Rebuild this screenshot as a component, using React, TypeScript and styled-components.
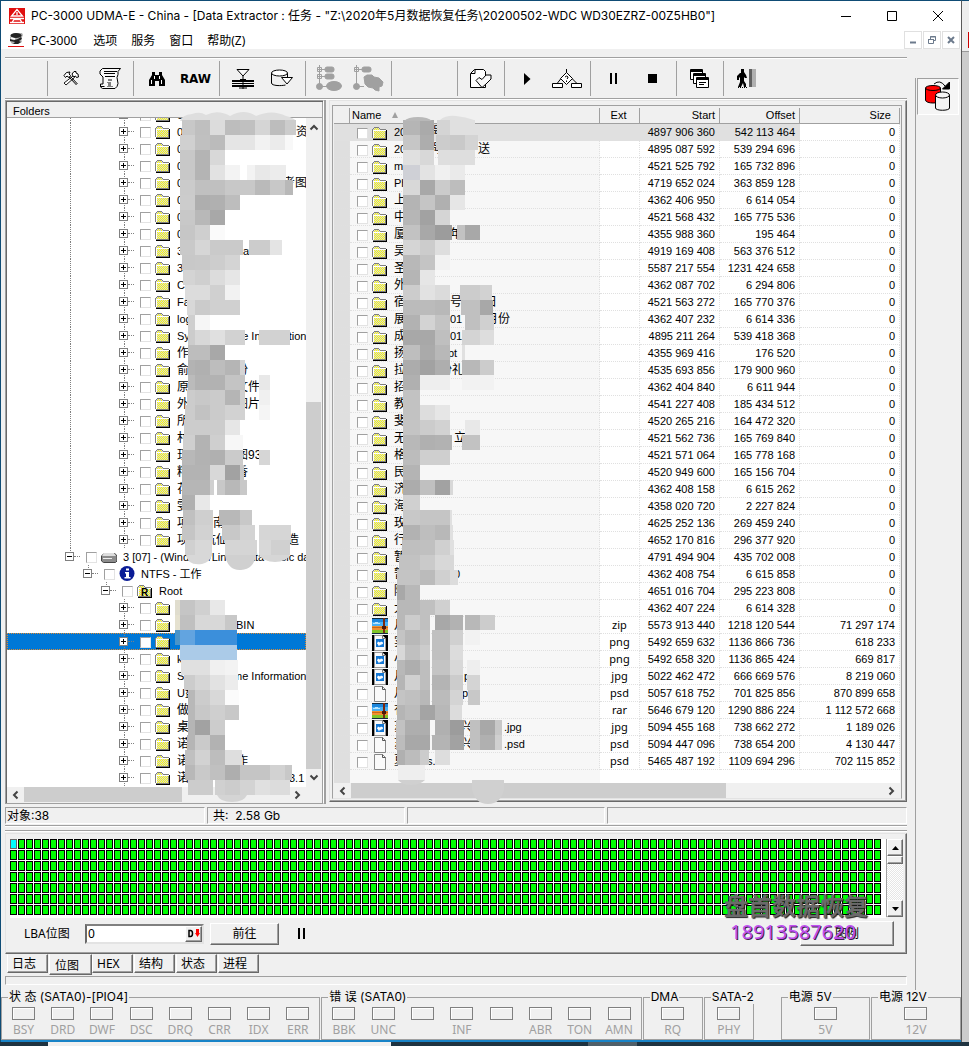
import React from 'react';
import styled, { createGlobalStyle, css } from 'styled-components';

const LIST = '"Liberation Sans", "Noto Sans CJK SC", sans-serif';
const UI = 'Inter, "Noto Sans CJK SC", sans-serif';
const PLAIN = '"Noto Sans", "Noto Sans CJK SC", sans-serif';

const Global = createGlobalStyle`
  * { box-sizing: border-box; }
  body { margin: 0; background: #d4d4d4; font: 12px/16px ${PLAIN}; color: #000; }
  button, input { font: inherit; color: inherit; margin: 0; padding: 0; }
  svg { display: block; }
`;

/* ---------- window frame ---------- */
const Desktop = styled.div`
  display: grid;
  grid-template-columns: minmax(0, 1fr) 7px;
`;
const Window = styled.main`
  background: #f0f0f0;
  border: 1px solid #0f4c75;
  border-width: 1px 1px 0 1px;
  border-right-color: #5a5a5a;
`;
const Behind = styled.div`
  background: linear-gradient(#eee 0 50px, #999 50px 51px, #ccc 51px 100%);
  border-top: 1px solid #0f4c75;
  padding-top: 31px;
  &::after { content: ''; display: block; width: 1px; height: 16px; margin-left: 6px; background: #c00; }
`;
const TitleBar = styled.header`
  display: flex;
  align-items: center;
  height: 29px;
  padding-left: 8px;
  background: #fff;
  gap: 6px;
`;
const Title = styled.h1`
  flex: 1;
  margin: 0;
  font: 12px/16px ${UI};
  white-space: nowrap;
  overflow: hidden;
`;
const WinButtons = styled.div`
  display: flex;
`;
const WinButton = styled.button`
  width: 46px;
  height: 28px;
  border: 0;
  background: none;
  display: grid;
  place-items: center;
`;
const MenuBar = styled.nav`
  display: flex;
  align-items: center;
  height: 19px;
  padding: 0 1px 0 7px;
  background: #fff;
`;
const MenuItem = styled.button`
  border: 0;
  background: none;
  padding: 2px 7px 0;
  line-height: 20px;
  white-space: nowrap;
  &:first-of-type { padding-right: 9px; }
`;
const Spacer = styled.div`flex: 1;`;
const ChildButton = styled.button`
  width: 18px;
  height: 18px;
  margin-left: 1px;
  border: 1px solid #e0e0e0;
  background: #fff;
  display: grid;
  place-items: center;
`;

/* ---------- work area ---------- */
const Work = styled.div`
  display: grid;
  grid-template-columns: minmax(0, 1fr) 46px;
`;
const Content = styled.div`
  padding: 8px 8px 5px 4px;
`;
const Side = styled.aside`
  border-left: 1px solid #a0a0a0;
  margin-top: 29px;
  padding-left: 1px;
`;
const SideButton = styled.button`
  width: 42px;
  height: 37px;
  border: 1px solid;
  border-color: #a0a0a0 #fff #fff #a0a0a0;
  background: #f5f5f5;
  display: grid;
  place-items: center;
`;
const Toolbar = styled.div`
  display: flex;
  height: 43px;
  padding: 3px 0 2px 42px;
  border-top: 1px solid #a0a0a0;
  border-bottom: 1px solid #fff;
  box-shadow: inset 0 1px #fff, inset 0 -1px #a0a0a0;
`;
const ToolGroup = styled.div<{ $blank?: boolean }>`
  display: flex;
  padding: 0 4px 0 3px;
  border-left: 1px solid #a0a0a0;
  height: 35px;
  ${p => p.$blank && css`width: 66px;`}
`;
const ToolButton = styled.button`
  width: 39px;
  height: 35px;
  border: 0;
  background: none;
  display: grid;
  place-items: center;
  font: bold 12px/18px "DejaVu Sans", sans-serif;
`;
const Split = styled.div`
  display: grid;
  grid-template-columns: 319px minmax(0, 1fr);
  height: 704px;
`;

/* ---------- folder tree ---------- */
const FolderPanel = styled.section`
  position: relative;
  border: 1px solid;
  border-color: #a0a0a0 #fff #a0a0a0 #a0a0a0;
  padding: 1px;
  box-shadow: inset 1px 1px #696969, inset -1px 0 #a0a0a0, 2px 0 #a0a0a0;
`;
const PanelHead = styled.h2`
  margin: 0;
  height: 16px;
  padding-left: 6px;
  font: 11px/18px ${LIST};
  border-bottom: 1px solid #a0a0a0;
`;
const TreeArea = styled.div`
  display: grid;
  grid-template-columns: minmax(0, 1fr) 16px;
  grid-template-rows: 669px 15px;
`;
const Tree = styled.ul`
  margin: 0;
  padding: 0 0 1px;
  list-style: none;
  background: #fff;
  display: flex;
  flex-direction: column;
  justify-content: flex-end;
  overflow: hidden;
`;
const TreeRow = styled.li<{ $selected?: boolean }>`
  display: flex;
  flex: none;
  height: 17px;
  font: 11px/18px ${LIST};
  white-space: nowrap;
  background: ${p => (p.$selected ? '#0078d7' : 'none')};
  outline: ${p => (p.$selected ? '1px dotted #e08a30' : 'none')};
  outline-offset: -1px;
`;
const Indent = styled.span<{ $level: number; $guide?: boolean }>`
  width: ${p => 58 + p.$level * 18}px;
  flex: none;
  ${p => p.$guide && css`
    &::before {
      content: '';
      display: block;
      height: 17px;
      margin-left: 63px;
      border-left: 1px dotted #808080;
    }
  `}
`;
const Node = styled.span<{ $line: boolean }>`
  position: relative;
  flex: none;
  width: 21px;
  padding-top: 4px;
  &::before {
    content: '';
    position: absolute;
    left: 5px;
    top: 0;
    height: ${p => (p.$line ? 17 : 5)}px;
    border-left: 1px dotted #808080;
  }
  &::after {
    content: '';
    position: absolute;
    left: 9px;
    top: 8px;
    width: 6px;
    border-top: 1px dotted #808080;
  }
`;
const Toggle = styled.button<{ $open?: boolean }>`
  position: relative;
  display: block;
  width: 9px;
  height: 9px;
  border: 1px solid #808080;
  background:
    linear-gradient(#000, #000) center / 5px 1px no-repeat,
    linear-gradient(#000, #000) center / 1px ${p => (p.$open ? 1 : 5)}px no-repeat,
    #fff;
`;
const Check = styled.input`
  appearance: none;
  flex: none;
  width: 11px;
  height: 11px;
  margin: 4px 4px 0 0;
  border: 1px solid;
  border-color: #a0a0a0 #e3e3e3 #e3e3e3 #a0a0a0;
  background: #fff;
`;
const IconSlot = styled.span`
  flex: none;
  width: 16px;
  margin-right: 6px;
`;
const Run = styled.span<{ $w?: number; $cjk: boolean }>`
  flex: none;
  width: ${p => (p.$w ? p.$w + 'px' : 'auto')};
  font-size: ${p => (p.$cjk ? 12 : 11)}px;
  white-space: pre;
`;
const Bar = styled.div<{ $v?: boolean; $pos: number; $len: string }>`
  display: flex;
  flex-direction: ${p => (p.$v ? 'column' : 'row')};
  justify-content: space-between;
  align-items: center;
  background: #f0f0f0;
  height: ${p => (p.$v ? 'auto' : '15px')};
  padding: ${p => (p.$v ? '5px 0' : '0 4px')};
  background-image: linear-gradient(#cdcdcd, #cdcdcd);
  background-repeat: no-repeat;
  background-position: ${p => (p.$v ? `0 ${p.$pos}px` : `${p.$pos}px 0`)};
  background-size: ${p => (p.$v ? `15px ${p.$len}` : `${p.$len} 15px`)};
`;

/* ---------- file list ---------- */
const ListPanel = styled.section`
  position: relative;
  margin-left: 5px;
  border: 1px solid;
  border-color: #e3e3e3 #696969 #696969 #e3e3e3;
  box-shadow: inset -1px -1px #a0a0a0;
  padding: 4px 4px 0 2px;
  height: 702px;
`;
const ListInner = styled.div`
  border: 1px solid;
  border-color: #a0a0a0 #a0a0a0 #e3e3e3 #a0a0a0;
  padding: 2px 1px 0;
`;
const ListBody = styled.div`
  height: 675px;
  background: linear-gradient(90deg, #dfdfdf 0 16px, #f7f7f7 16px 266px, #fff 266px);
`;
const Table = styled.table`
  width: 100%;
  table-layout: fixed;
  border-collapse: separate;
  border-spacing: 0;
  font: 11px/16px ${LIST};
`;
const Th = styled.th<{ $align?: string }>`
  height: 16px;
  padding: 0 4px 0 2px;
  line-height: 15px;
  font-weight: normal;
  text-align: ${p => p.$align || 'left'};
  background: #f0f0f0;
  border-right: 1px solid #a0a0a0;
  border-bottom: 1px solid #a0a0a0;
  &:last-child { padding-right: 8px; }
`;
const SortMark = styled.span`
  display: inline-block;
  margin-left: 8px;
  vertical-align: 1px;
  border: 3px solid transparent;
  border-top: 0;
  border-bottom: 6px solid #a0a0a0;
`;
const FileRow = styled.tr<{ $current?: boolean }>`
  height: 17px;
  & > td:not(:last-child) { background: ${p => (p.$current ? '#e0e0e0' : 'none')}; }
`;
const Td = styled.td<{ $align?: string; $ui?: boolean }>`
  height: 17px;
  padding: 0 4px;
  text-align: ${p => p.$align || 'right'};
  white-space: nowrap;
  border-right: 1px dotted #e0e0e0;
  border-bottom: 1px dotted #e0e0e0;
  ${p => p.$ui && css`font: 11px/16px ${PLAIN};`}
`;
const NameCell = styled.div`
  display: flex;
  height: 16px;
  padding-left: 3px;
`;
const Mosaic = styled.svg`
  position: absolute;
  left: 0;
  top: 0;
  overflow: visible;
  pointer-events: none;
`;

/* ---------- status cells ---------- */
const StatusBar = styled.div`
  display: grid;
  grid-template-columns: 200px 198px 198px minmax(0, 1fr);
  column-gap: 2px;
  margin-top: 3px;
  padding-bottom: 1px;
  border-bottom: 1px solid #a0a0a0;
`;
const StatusCell = styled.div<{ $pad?: number }>`
  height: 17px;
  padding-left: ${p => p.$pad ?? 1}px;
  border: 1px solid;
  border-color: #a0a0a0 #fff #fff #a0a0a0;
  font: 12px/16px ${UI};
  white-space: pre;
`;
const Groove = styled.div`
  height: 5px;
  border-bottom: 1px solid #a0a0a0;
  border-top: 1px solid #fff;
  box-shadow: 0 1px #fff;
`;

/* ---------- bitmap panel ---------- */
const MapPanel = styled.section`
  position: relative;
  margin-top: 2px;
  border: 1px solid;
  border-color: #e3e3e3 #696969 #696969 #e3e3e3;
  box-shadow: inset -1px -1px #a0a0a0;
  padding: 5px 3px 4px 4px;
`;
const MapArea = styled.div`
  display: grid;
  grid-template-columns: minmax(0, 1fr) 17px;
`;
const Cells = styled.div`
  display: grid;
  grid-template-columns: repeat(auto-fill, 7px);
  grid-auto-rows: 10px;
  gap: 1px;
  height: 79px;
  background: #fff;
  overflow: hidden;
`;
const Cell = styled.i<{ $first?: boolean }>`
  border: 1px solid ${p => (p.$first ? '#666' : '#000')};
  background: ${p => (p.$first ? '#00ffff' : '#00ff00')};
`;
const ClassicBar = styled.div`
  display: flex;
  flex-direction: column;
  height: 78px;
  border-left: 1px solid #a0a0a0;
  background: repeating-conic-gradient(#e6e6e6 0 25%, #fff 0 50%) 0 0 / 2px 2px;
`;
const raised = css`
  border: 1px solid;
  border-color: #fff #696969 #696969 #fff;
  background: #f0f0f0;
  box-shadow: inset -1px -1px #a0a0a0;
`;
const ClassicButton = styled.button`
  ${raised}
  height: 17px;
  display: grid;
  place-items: center;
`;
const ClassicThumb = styled.div`
  ${raised}
  height: 8px;
  margin-bottom: auto;
`;
const Controls = styled.div`
  display: flex;
  align-items: center;
  height: 31px;
  padding: 0 9px 0 14px;
`;
const LbaLabel = styled.label`
  width: 61px;
`;
const LbaBox = styled.div`
  display: flex;
  width: 119px;
  height: 20px;
  margin-right: 6px;
  border: 2px solid;
  border-color: #808080 #e3e3e3 #e3e3e3 #696969;
  background: #fff;
`;
const LbaInput = styled.input`
  flex: 1;
  min-width: 0;
  border: 0;
  padding-left: 1px;
  background: none;
`;
const DButton = styled.button`
  ${raised}
  width: 17px;
  display: grid;
  place-items: center;
`;
const PushButton = styled.button<{ $w: number }>`
  ${raised}
  width: ${p => p.$w}px;
  height: ${p => (p.$w > 80 ? 25 : 22)}px;
`;
const PauseButton = styled.button`
  width: 46px;
  border: 0;
  background: none;
  display: grid;
  place-items: center;
`;
const Watermark = styled.div`
  position: absolute;
  right: 38px;
  bottom: 10px;
  font: bold 24px/30px ${PLAIN};
  color: #6a6a6a;
  text-shadow: 1px 1px 1px #222;
  pointer-events: none;
`;
const Phone = styled.div`
  margin-left: 6px;
  font: 20px/22px ${PLAIN};
  color: #c050f0;
  text-shadow: 1px 1px #402050;
`;
const Tabs = styled.div`
  display: flex;
  height: 21px;
  padding-left: 2px;
`;
const Tab = styled.button<{ $active?: boolean }>`
  height: ${p => (p.$active ? 21 : 19)}px;
  width: ${p => (p.$active ? 43 : 41)}px;
  margin-right: ${p => (p.$active ? 0 : 1)}px;
  padding: ${p => (p.$active ? '2px 0 0 5px' : '0 0 0 4px')};
  text-align: left;
  border: 1px solid;
  border-color: transparent #696969 #696969 #fff;
  background: #f0f0f0;
  box-shadow: inset -1px -1px #a0a0a0;
`;
const Strip = styled.div`
  height: 9px;
  margin-top: 1px;
  border: 1px solid;
  border-color: #a0a0a0 #fff #fff #a0a0a0;
`;

/* ---------- indicator groups ---------- */
const Groups = styled.div`
  display: grid;
  grid-template-columns:
    minmax(0, 319fr) minmax(0, 320fr) minmax(0, 60fr) minmax(0, 50fr) 25px minmax(0, 89fr) minmax(0, 90fr);
  column-gap: 1px;
  height: 50px;
`;
const Group = styled.fieldset<{ $skip?: boolean }>`
  ${p => p.$skip && css`grid-column: 6;`}
  min-width: 0;
  height: 50px;
  margin: 0;
  padding: 0 2px;
  border: 1px solid #a0a0a0;
`;
const Legend = styled.legend`
  padding: 0 1px;
  margin-left: 4px;
  font: 12px/14px ${UI};
  white-space: pre;
`;
const Leds = styled.div`
  display: flex;
`;
const Led = styled.div`
  flex: 1;
  min-width: 0;
  height: 30px;
  text-align: center;
  color: #a0a0a0;
  line-height: 15px;
  padding-top: 3px;
  &::before {
    content: '';
    display: block;
    width: 21px;
    height: 11px;
    margin: 0 auto 2px;
    border: 1px solid #808080;
    box-shadow: inset 1px 1px #fff;
  }
`;
const Edge = styled.div`
  height: 2px;
  background: #1883c7;
`;
const Taskbar = styled.footer`
  grid-column: 1 / -1;
  display: flex;
  height: 6px;
  background: #1f3340;
`;
const TaskItem = styled.span<{ $left: number; $w: number; $bg: string }>`
  width: ${p => p.$w}px;
  margin-left: ${p => p.$left}px;
  background: ${p => p.$bg};
`;

/* ---------- icons ---------- */
const Hidden = styled.svg`
  position: absolute;
`;
const Defs = () => (
  <Hidden width="0" height="0" aria-hidden>
    <defs>
      <pattern id="dither" width="2" height="2" patternUnits="userSpaceOnUse">
        <rect width="2" height="2" fill="#ff0" />
        <rect width="1" height="1" fill="#d0d0e8" />
        <rect x="1" y="1" width="1" height="1" fill="#d0d0e8" />
      </pattern>
    </defs>
  </Hidden>
);
const Folder = ({ mark }: { mark?: string }) => (
  <svg width="16" height="17" viewBox="0 0 16 17" shapeRendering="crispEdges">
    <path d="M1 14V5h1V4h5v1h7v10H1z" fill="url(#dither)" />
    <path d="M0 5h1v9H0zM1 4h1v1H1zM2 3h5v1H2zM7 4h1v1H7zM8 5h6v1H8z" fill="#808080" />
    <path d="M1 6h1v8H1zM2 6h12v1H2z" fill="#fff" />
    <path d="M14 6h1v10H1v-1h13z" fill="#000" />
    <path d="M13 7h1v8h-1zM1 14h12v1H1z" fill="#808080" />
    {mark && <text x="4" y="14" fontSize="10" fontWeight="bold" fontFamily="Liberation Sans">{mark}</text>}
  </svg>
);
const Drive = () => (
  <svg width="16" height="17" viewBox="0 0 16 17">
    <path d="M3 5.500h11l2 2.500v5l-1.500 1.500h-12L.5 13V8z" fill="#8c8c8c" stroke="#444" />
    <path d="M3 5h10l2 3H1z" fill="#ddd" />
    <path d="M2 10.500h9" stroke="#eee" />
  </svg>
);
const Info = () => (
  <svg width="16" height="17" viewBox="0 0 16 17">
    <circle cx="8" cy="8.500" r="7.500" fill="#0a1c96" />
    <path d="M7 3.500h3v2H7zM6 7h4v5h1.500v1.500H5.500V12H7V8.500H6z" fill="#fff" />
  </svg>
);
const Page = () => (
  <svg width="16" height="17" viewBox="0 0 16 17">
    <path d="M2.500 1.500h8l3 3v12h-11z" fill="#fafafa" stroke="#888" />
    <path d="M10.500 1.500v3h3" fill="none" stroke="#555" />
  </svg>
);
const Picture = () => (
  <svg width="16" height="17" viewBox="0 0 16 17">
    <path d="M0 1h16v16H0z" fill="#000" />
    <path d="M2.500 1.500h8l3 3v12h-11z" fill="#fafafa" stroke="#999" />
    <path d="M10.500 1.500v3h3" fill="none" stroke="#777" />
    <path d="M4 5h8v8H4z" fill="#1477d4" />
    <path d="M5 9.500l1-2 2 1 1-1 2 1v2l-1-1-1 2-1-1-1 2-1-2z" fill="#fff" />
  </svg>
);
const Archive = () => (
  <svg width="16" height="17" viewBox="0 0 16 17" shapeRendering="crispEdges">
    <path d="M0 1h16v16H0z" fill="#102a40" />
    <path d="M0 2h16v7H0z" fill="#48b0f4" />
    <path d="M0 2h16v3H0z" fill="#1c86dc" />
    <path d="M1 6h7v1H1zM3 5h3v1H3z" fill="#b8e4ff" />
    <path d="M0 9h16v4H0z" fill="#f09030" />
    <path d="M0 10h16v1H0z" fill="#c86818" />
    <path d="M0 13h16v3H0z" fill="#80c428" />
    <path d="M11 1h2v15h-2z" fill="#7a2a10" />
    <path d="M10 9h4v3h-4z" fill="#4a1808" />
  </svg>
);
const Chevron = ({ dir }: { dir: 'l' | 'r' | 'u' | 'd' }) => {
  const d = { l: 'M6.500 1.500L3 5l3.500 3.500', r: 'M3.500 1.500L7 5 3.500 8.500', u: 'M1.500 6.500L5 3l3.500 3.500', d: 'M1.500 3.500L5 7l3.500-3.500' }[dir];
  return <svg width="10" height="10" viewBox="0 0 10 10"><path d={d} fill="none" stroke="#444" strokeWidth="2" /></svg>;
};
const Tri = ({ up }: { up?: boolean }) => (
  <svg width="7" height="4" viewBox="0 0 7 4"><path d={up ? 'M0 4L3.500 0 7 4z' : 'M0 0L3.500 4 7 0z'} /></svg>
);
const Logo = () => (
  <svg width="16" height="16" viewBox="0 0 16 16">
    <path d="M0 0h16v16H0z" fill="#e01010" />
    <path d="M8 1.500L2.500 8h11zM8 4v3" fill="none" stroke="#fff" strokeWidth="1.300" />
    <path d="M1 10.500h14M3 14.500l2-3h6l2 3M1 14.500h14" fill="none" stroke="#fff" strokeWidth="1.300" />
  </svg>
);
const DiskLogo = () => (
  <svg width="16" height="15" viewBox="0 0 16 15">
    <path d="M2 5l4-4h8l1 2-2 4 1 3-4 2H4L2 9z" fill="#b0b0b0" />
    <ellipse cx="8" cy="3.500" rx="5.500" ry="2.500" fill="#222" />
    <path d="M2 7q5 3 11-2l1 2-3 2 2 1-3 2H5l2-2-5-1z" fill="#222" />
    <path d="M3 6l4 1" stroke="#fff" strokeWidth="1.500" />
    <path d="M0 14.500h16" stroke="#e01010" />
  </svg>
);

const Ico = ({ w, h, children }: { w: number; h: number; children: React.ReactNode }) => (
  <svg width={w} height={h} viewBox={`0 0 ${w} ${h}`} fill="none" stroke="#000">{children}</svg>
);
const Tools = () => (
  <Ico w={16} h={15}>
    <path d="M1 12l9-7 1.500 1.500L3 14z" fill="#fff" strokeWidth=".9" />
    <path d="M9 3l2-2.500h2v1.500l2 1 .5 3-2 .5-1-1.500-2 1z" fill="#fff" />
    <path d="M1 4.500l2.500-3 3.500-.5-1 2 1.500 1.500-1.500 2L4 5 2.500 6.500z" fill="#fff" />
    <path d="M6 6l7.500 8M7.500 5.500l7 7.500" />
  </Ico>
);
const Scroll = () => (
  <Ico w={22} h={22}>
    <path d="M3.500.5h18l-2.500 3v3l-1 3 1 6-1 3-2 2H3.500l-2-1.500v-3H4v-7l-3-3v-3z" fill="#f8f8f8" />
    <path d="M5 3.500h13M5 5.500h11M6 8.500h10M1.500 18.500h4" />
    <path d="M9 11h4v2H9zM8 14h4v4h2v1H8v-1h1v-3H8z" fill="#808080" stroke="none" />
  </Ico>
);
const Binoculars = () => (
  <Ico w={16} h={14}>
    <path d="M3 0h3v3h4V0h3v3l3 5v6h-6V9H6v5H0V8l3-5z" fill="#000" stroke="none" />
    <path d="M2.500 8v4M5.500 4v3M10.500 4v3M12.500 8v4" stroke="#fff" />
  </Ico>
);
const Press = () => (
  <Ico w={24} h={20}>
    <path d="M6 .5h12l-6 6.500zM12 7v13" fill="#f8f8f8" />
    <path d="M1 12h22M1 17h22" strokeWidth="2" />
    <path d="M1 14.500h22" strokeWidth="1" />
    <path d="M9 10.500h6M8 19h8" />
  </Ico>
);
const CylinderDown = () => (
  <Ico w={24} h={19}>
    <path d="M1.500 4v10c0 3 10 3 14 2M17.500 4v4" />
    <ellipse cx="9.500" cy="4" rx="8" ry="3" fill="#fff" />
    <path d="M11.500 8.500h11l-5.500 6.500z" fill="#fff" />
  </Ico>
);
const TreeShape = ({ b }: { b?: boolean }) => (
  <svg width={b ? 32 : 28} height="27" viewBox={b ? '0 0 32 27' : '0 0 28 27'} fill="#a0a0a0" stroke="#a0a0a0">
    <path d="M4.500 0v22M4 4.500h6M4 21.500h8" fill="none" />
    <path d="M2.500 2.500h4v4h-4zM4.500 2.500v4M2.500 4.500h4" fill="#f0f0f0" />
    <rect x="10" y="2" width="9" height="5" rx="2" />
    {!b && <path d="M2.500 9.500h4v4h-4zM4.500 9.500v4M2.500 11.500h4" fill="#f0f0f0" />}
    {!b && <path d="M6 11.500h5" />}
    {!b && <rect x="10" y="9" width="9" height="5" rx="2" />}
    <circle cx="4.500" cy="21.500" r="3" />
    {b ? <path d="M12 12l3-2h5l2 2 5 1 4 4-1 4-3 1v4l-4-1-2-2-5-1-3-3z" /> : <ellipse cx="19" cy="21" rx="7.500" ry="4.500" />}
  </svg>
);
const PagePen = () => (
  <Ico w={24} h={20}>
    <path d="M1.500 18.500V4.500l4-4h9l2 2v16zM6 .5v4H2" fill="#fff" />
    <path d="M7 11.500l3-3 3 2 4-4.500h5v4l-5 5-4 3.500z" fill="#f8f8f8" />
  </Ico>
);
const Flow = () => (
  <Ico w={30} h={20}>
    <path d="M14.500 0v4M9 9.500L5.500 14M20 9.500l4.500 4.500" />
    <path d="M14.500 3.500l6 6-6 6-6-6z" fill="#fff" />
    <path d="M.5 14.500h10v4H.5zM19.500 14.500h10v4h-10z" fill="#fff" />
    <path d="M13 8q2-2 3 0 0 1-1 2M14.500 11.500v1.500" />
  </Ico>
);
const Pause = () => (
  <svg width="8" height="11" viewBox="0 0 8 11"><path d="M0 0h2v11H0zM5 0h2v11H5z" /></svg>
);
const Cascade = () => (
  <Ico w={20} h={20}>
    {[0, 4, 8].map(o => (
      <g key={o}>
        <path d={`M${o * 0.75 + 0.5} ${o + 0.5}h12v10h-12z`} fill="#fff" />
        <path d={`M${o * 0.75} ${o + 2}h13`} strokeWidth="2" />
      </g>
    ))}
    <path d="M9 13.500h7M9 15.500h5" />
  </Ico>
);
const Exit = () => (
  <svg width="19" height="19" viewBox="0 0 19 19">
    <path d="M4 0h3v3l2 3 1 3H8L7 8v4l2 3v3H7l-1-4-2 4H1l2-5V8L2 9v2H0V7l3-3h1z" />
    <path d="M12 0h3v18h-3z" fill="#606060" />
    <path d="M15 0h4v18h-4z" fill="#b0b0b0" />
    <path d="M1 18.500h9" stroke="#000" strokeDasharray="1 1" />
  </svg>
);
const Cylinders = () => (
  <Ico w={26} h={31}>
    <path d="M.5 7v12c0 4 15 4 15 0V7" fill="#f00" />
    <ellipse cx="8" cy="7" rx="7.500" ry="2.500" fill="#f00" />
    <path d="M10.500 14v13c0 3 14 3 14 0V14" fill="#f4f4f4" />
    <ellipse cx="17.500" cy="14" rx="7" ry="3" fill="#f4f4f4" />
    <path d="M9 3q6-5 11 2" />
    <path d="M24.500 1v7h-7z" fill="#000" />
  </Ico>
);

/* ---------- data ---------- */
/* each entry: head of the name, then [x, text] pieces that stay readable */
type Piece = [number, string];
type TreeItem = { level?: number; icon?: 'drive' | 'info' | 'root'; head: string; rest?: Piece[]; open?: boolean; guide?: boolean; selected?: boolean };
const g = (head: string, ...rest: Piece[]): TreeItem => ({ head, rest, guide: true });
const t = (head: string, ...rest: Piece[]): TreeItem => ({ head, rest });
const tree: TreeItem[] = [
  g('03'), g('0', [119, '资']), g('0'), g('0'), g('0', [106, '考图']), g('0'), g('0'), g('0'), g('3', [66, 'at']),
  g('3'), g('C'), g('Fa'), g('log'), g('System Vo', [56, 'me Information']), g('作'), g('俞', [59, '份']), g('原', [59, '文件']),
  g('外', [59, '图片']), g('所'), g('村'), g('珏', [59, '图93']), g('精', [59, '香']), g('花'), g('雯'),
  g('项', [36, '南']), g('项', [27, '炕仙'], [110, '造']),
  { level: 0, icon: 'drive', head: '3 [07] - (Windows/Linux Data Basic data)', open: true },
  { level: 1, icon: 'info', head: 'NTFS - 工作', open: true },
  { level: 2, icon: 'root', head: 'Root', open: true },
  t(''), t('', [59, 'BIN']), { head: '', selected: true }, t('k'), t('System Vo', [56, 'me Information']), t('U盘'), t('做'),
  t('桌'), t('诺'), t('诺', [59, '作']), t('诺', [112, '3.1']),
];

type FileItem = [Piece[], string, string, string, string];
const file = (head: string, rest: Piece[], ext: string, start: string, offset: string, size = '0'): FileItem =>
  [[[0, head], ...rest], ext, start, offset, size];
const files: FileItem[] = [
  file('20', [[38, '号']], '', '4897 906 360', '542 113 464'),
  file('20', [[38, '号'], [84, '送']], '', '4895 087 592', '539 294 696'),
  file('ma', [], '', '4521 525 792', '165 732 896'),
  file('Ph', [], '', '4719 652 024', '363 859 128'),
  file('上', [], '', '4362 406 950', '6 614 054'),
  file('中', [], '', '4521 568 432', '165 775 536'),
  file('厦', [[56, '年']], '', '4355 988 360', '195 464'),
  file('吴', [], '', '4919 169 408', '563 376 512'),
  file('圣', [], '', '5587 217 554', '1231 424 658'),
  file('外', [], '', '4362 087 702', '6 294 806'),
  file('宿', [[56, '号-'], [91, '日']], '', '4521 563 272', '165 770 376'),
  file('展', [[56, '01'], [92, '月份']], '', '4362 407 232', '6 614 336'),
  file('成', [[56, '018']], '', '4895 211 264', '539 418 368'),
  file('扬', [[54, 'pt']], '', '4355 969 416', '176 520'),
  file('拉', [[46, '份礼']], '', '4535 693 856', '179 900 960'),
  file('招', [], '', '4362 404 840', '6 611 944'),
  file('教', [], '', '4541 227 408', '185 434 512'),
  file('斐', [], '', '4520 265 216', '164 472 320'),
  file('无', [[60, '立']], '', '4521 562 736', '165 769 840'),
  file('格', [], '', '4521 571 064', '165 778 168'),
  file('民', [], '', '4520 949 600', '165 156 704'),
  file('济', [], '', '4362 408 158', '6 615 262'),
  file('海', [], '', '4358 020 720', '2 227 824'),
  file('玫', [], '', '4625 252 136', '269 459 240'),
  file('行', [], '', '4652 170 816', '296 377 920'),
  file('暂', [], '', '4791 494 904', '435 702 008'),
  file('暂', [[60, '0']], '', '4362 408 754', '6 615 858'),
  file('陈', [], '', '4651 016 704', '295 223 808'),
  file('大', [], '', '4362 407 224', '6 614 328'),
  file('月', [], 'zip', '5573 913 440', '1218 120 544', '71 297 174'),
  file('实', [], 'png', '5492 659 632', '1136 866 736', '618 233'),
  file('小', [], 'png', '5492 658 320', '1136 865 424', '669 817'),
  file('月', [[70, 'p']], 'jpg', '5022 462 472', '666 669 576', '8 219 060'),
  file('月', [[68, 'p']], 'psd', '5057 618 752', '701 825 856', '870 899 658'),
  file('有', [], 'rar', '5646 679 120', '1290 886 224', '1 112 572 668'),
  file('苏', [[66, '兴'], [110, '.jpg']], 'jpg', '5094 455 168', '738 662 272', '1 189 026'),
  file('苏', [[66, '兴'], [110, '.psd']], 'psd', '5094 447 096', '738 654 200', '4 130 447'),
  file('夏', [[33, 's.']], 'psd', '5465 487 192', '1109 694 296', '702 115 852'),
];

/* censor blocks: per 15px band, runs of [x, width, colour] */
type Band = [number, ...(number | string)[]];
const treeBlocks: Band[] = [
  [120, 182, 13, 'c8', 195, 15, 'bf', 210, 15, 'dc', 225, 15, 'bd', 240, 15, 'c0', 255, 15, 'd5', 270, 15, 'bd', 285, 11, 'cc'],
  [135, 180, 15, 'd0', 195, 15, 'c0', 210, 15, 'bb', 225, 30, 'e5', 255, 15, 'f2', 270, 15, 'eb', 285, 8, 'f8'],
  [150, 180, 15, 'c8', 195, 15, 'b4', 210, 15, 'd8'],
  [165, 180, 15, 'c8', 195, 15, 'b4', 210, 15, 'e2', 225, 15, 'f3', 247, 8, 'f3', 255, 15, 'e8', 270, 16, 'ec'],
  [180, 180, 15, 'cb', 195, 30, 'c0', 225, 30, 'c8', 255, 15, 'ba', 270, 15, 'c8', 285, 8, 'b8'],
  [195, 180, 15, 'cc', 195, 15, 'ae', 210, 15, 'b0', 225, 15, 'bd'],
  [210, 180, 15, 'c8', 195, 15, 'b8', 210, 15, 'a8'],
  [225, 180, 15, 'c6', 195, 15, 'cf', 210, 15, 'fa'],
  [240, 180, 15, 'c9', 195, 15, 'd6', 210, 33, 'ca', 249, 21, 'cc', 270, 12, 'e4'],
  [255, 182, 13, 'c8', 195, 15, 'c9', 210, 15, 'cd', 225, 15, 'd4'],
  [270, 183, 12, 'd4', 195, 15, 'cf', 210, 15, 'dc', 225, 15, 'e6'],
  [285, 185, 10, 'dc', 195, 15, 'dc', 210, 15, 'd0', 225, 15, 'f2'],
  [300, 187, 8, 'd8', 195, 15, 'cb', 210, 30, 'd0'],
  [315, 188, 7, 'cf', 195, 15, 'f6'],
  [330, 188, 7, 'cc', 195, 15, 'd8', 210, 15, 'e0', 225, 20, 'd2', 259, 31, 'd2'],
  [345, 188, 22, 'bd', 210, 15, 'a8'],
  [360, 188, 7, 'b3', 195, 15, 'b0', 210, 15, 'bd', 225, 15, 'b5', 240, 5, 'd4'],
  [375, 188, 7, 'bb', 195, 30, 'b2', 225, 20, 'c4', 259, 11, 'e8'],
  [390, 187, 8, 'cc', 195, 15, 'c8', 210, 15, 'cb', 225, 15, 'b5', 240, 5, 'd0', 259, 11, 'f0'],
  [405, 185, 10, 'cc', 195, 15, 'c2', 210, 15, 'cb', 225, 20, 'd2', 259, 11, 'f5'],
  [420, 184, 41, 'cc', 225, 15, 'e6'],
  [435, 183, 12, 'cf', 195, 15, 'b3', 210, 15, 'cf', 225, 18, 'f7'],
  [450, 182, 13, 'b8', 195, 15, 'b2', 210, 15, 'b0', 225, 18, 'cb', 259, 11, 'd6'],
  [465, 182, 28, 'b3', 210, 15, 'd8', 225, 15, 'a2', 240, 4, 'c8'],
  [480, 182, 28, 'b6', 210, 4, 'd0', 217, 8, 'c8', 225, 15, 'b8', 240, 7, 'c8'],
  [495, 182, 13, 'b0', 195, 15, 'e8'],
  [510, 183, 12, 'c0', 195, 18, 'cf', 219, 21, 'b8', 240, 12, 'c8'],
  [525, 182, 13, 'c5', 195, 18, 'd2', 222, 18, 'c8', 240, 15, 'd3', 259, 32, 'd6'],
  [540, 185, 10, 'd0', 195, 17, 'd8', 225, 32, 'd5', 259, 12, 'd8', 271, 19, 'd0'],
  [600, 175, 5, '#e0ddce', 180, 15, 'c5', 195, 15, 'd0', 210, 15, 'e8'],
  [615, 175, 5, '#e5e1cf', 180, 15, 'c0', 195, 30, 'd8', 225, 12, 'c8'],
  [630, 175, 5, '#4a94c8', 180, 15, '#62a4e0', 195, 42, '#3b8fdb'],
  [645, 180, 57, '#abcbe8'],
  [660, 181, 29, 'e0', 210, 15, 'f0', 225, 13, 'f3'],
  [675, 184, 11, 'cc', 195, 15, 'd6', 210, 15, 'e2', 225, 13, 'ec'],
  [690, 188, 7, 'b8', 195, 15, 'cc', 210, 15, 'd8', 225, 14, 'fb'],
  [705, 188, 7, 'b8', 195, 15, 'c8', 210, 15, 'cf', 225, 14, 'c8'],
  [720, 188, 7, 'b5', 195, 15, 'a2', 210, 15, 'cc'],
  [735, 187, 8, 'b5', 195, 15, 'ca', 210, 15, 'b2'],
  [750, 185, 10, 'c0', 195, 15, 'd2', 210, 15, 'bd', 225, 17, 'de'],
  [765, 185, 10, 'b8', 195, 15, 'c9', 210, 15, 'c0', 225, 15, 'ae', 240, 30, 'c5', 270, 15, 'd2', 285, 7, 'c8'],
  [780, 188, 25, 'cc', 215, 10, 'd0', 225, 15, 'cc', 240, 15, 'd3', 255, 15, 'e0', 270, 20, 'dc'],
];
const listBlocks: Band[] = [
  [120, 403, 17, 'b5', 420, 14, 'aa', 437, 13, 'd4', 450, 25, 'e0'],
  [135, 403, 17, 'c6', 420, 14, 'ad', 436, 14, 'cc', 450, 15, 'c9', 465, 13, 'd4'],
  [150, 403, 17, 'e0', 420, 14, 'd8', 438, 37, 'de'],
  [165, 403, 17, '#cfd0d6', 420, 15, 'e3', 435, 15, 'f0', 450, 15, 'ea'],
  [180, 403, 17, 'd8', 420, 15, 'a8', 435, 15, 'cb', 450, 15, 'bd'],
  [195, 403, 17, 'b4', 420, 15, 'c5', 435, 15, 'b0', 450, 15, 'e6'],
  [210, 403, 17, 'b6', 420, 15, 'a2', 435, 15, 'd5'],
  [225, 403, 17, 'c2', 420, 15, 'a8', 435, 17, '9c', 457, 8, 'c2', 465, 15, 'a8'],
  [240, 403, 17, 'd5', 420, 15, 'cc', 435, 15, 'de'],
  [255, 403, 17, 'b8', 420, 15, 'c4', 435, 15, 'f2'],
  [270, 403, 17, 'b5', 420, 15, 'e6'],
  [285, 403, 17, 'cc', 420, 15, 'e2', 435, 15, 'db', 460, 20, 'cc', 480, 12, 'd2'],
  [300, 403, 32, 'bb', 435, 15, 'b8', 461, 19, 'c0', 480, 13, 'a8'],
  [315, 403, 17, 'b2', 420, 15, 'd3', 435, 15, 'c4', 465, 15, 'c0', 480, 14, 'd0'],
  [330, 403, 32, 'a8', 435, 15, 'bf', 462, 18, 'd4', 480, 14, 'dd'],
  [345, 403, 17, 'be', 420, 15, 'aa', 435, 15, 'b8', 462, 3, 'e0'],
  [360, 403, 17, 'ac', 420, 15, 'a2', 435, 15, 'ae', 462, 18, 'b8', 480, 14, 'cc'],
  [375, 403, 17, 'b0', 420, 30, 'ee', 462, 32, 'f2'],
  [390, 403, 17, 'c2'],
  [405, 403, 17, 'c2', 420, 15, 'dd', 435, 15, 'e6'],
  [420, 403, 17, 'c4', 420, 15, 'cc', 435, 15, 'd2', 465, 15, 'e8'],
  [435, 403, 17, 'b8', 420, 15, 'b0', 435, 17, 'b2', 462, 18, 'c2'],
  [450, 403, 17, 'bc', 420, 30, 'cf'],
  [465, 403, 17, 'b4'],
  [480, 403, 17, 'ac', 420, 15, 'c0', 435, 15, 'a2', 450, 3, 'd8'],
  [495, 403, 17, 'd0'],
  [510, 403, 17, 'c8', 420, 30, 'c5', 450, 2, 'e0'],
  [525, 403, 17, 'b2', 420, 15, 'be', 435, 15, 'b8', 450, 3, 'e0'],
  [540, 402, 18, 'bf', 420, 15, 'c0', 435, 15, 'd0', 450, 4, 'e0'],
  [555, 399, 21, 'c2', 420, 15, 'ca', 435, 19, 'd8'],
  [570, 397, 23, 'c4', 420, 15, 'bb', 435, 15, 'd0', 450, 8, 'dc'],
  [585, 397, 8, 'a8', 405, 15, 'b8'],
  [600, 397, 23, 'b8', 420, 15, 'c0', 435, 15, 'd0'],
  [615, 397, 8, 'b8', 405, 15, 'cc', 420, 10, 'c0', 435, 15, 'a8', 450, 13, 'b2', 465, 15, 'b8', 480, 15, 'cc'],
  [630, 397, 8, 'c4', 405, 15, 'b8', 420, 10, 'c4', 432, 18, 'c0', 450, 13, 'd0', 465, 15, 'f2'],
  [645, 397, 8, 'd8', 405, 15, 'c0', 420, 10, 'cc', 432, 18, 'c0', 450, 13, 'dc'],
  [660, 397, 8, 'b8', 405, 15, 'ae', 420, 10, 'be', 432, 18, 'c4', 450, 13, 'd8', 467, 13, 'ee'],
  [675, 397, 8, 'b5', 405, 15, 'd0', 420, 10, 'be', 432, 18, 'b4', 450, 13, 'cc', 467, 13, 'd4'],
  [690, 397, 8, 'c4', 405, 15, 'c0', 420, 10, 'b8', 432, 18, 'bb', 450, 13, 'd4', 468, 12, 'c8'],
  [705, 397, 8, 'b5', 405, 15, 'bc', 420, 15, 'a4', 435, 15, 'b8', 450, 12, 'dc'],
  [720, 396, 9, 'c2', 405, 25, 'ae', 435, 15, 'b0', 450, 14, '9c', 470, 10, 'c0', 480, 15, 'a8', 495, 7, 'c8'],
  [735, 396, 9, 'bc', 405, 25, 'a8', 432, 18, 'b4', 450, 14, 'a2', 470, 10, 'c0', 480, 15, 'b0', 495, 7, 'd0'],
  [750, 397, 8, 'b0', 405, 15, 'bc', 420, 9, 'cc', 435, 15, 'dd'],
  [765, 398, 27, 'ee'],
];
const blocks = (bands: Band[], dx: number, dy: number) =>
  bands.flatMap(([y, ...r]) => {
    const out: React.ReactNode[] = [];
    for (let i = 0; i < r.length; i += 3) {
      const c = String(r[i + 2]);
      out.push(
        <rect key={`${y}-${i}`} x={Number(r[i]) - dx} y={y - dy} width={Number(r[i + 1])} height="15"
          fill={c[0] === '#' ? c : `#${c}${c}${c}`} />,
      );
    }
    return out;
  });

const Pieces = ({ items }: { items: Piece[] }) => (
  <>{items.map(([x, s], i) => {
    const next = items[i + 1];
    return <Run key={i} $w={next ? next[0] - x : undefined} $cjk={/^[\u4e00-\u9fff]/.test(s)}>{s}</Run>;
  })}</>
);
const treeIcon = { drive: <Drive />, info: <Info />, root: <Folder mark="R" /> };
const fileIcon = (ext: string) =>
  ext === '' ? <Folder /> : ext === 'psd' ? <Page /> : ext === 'zip' || ext === 'rar' ? <Archive /> : <Picture />;

const groups: { name: string; skip?: boolean; leds: string[] }[] = [
  { name: '状 态 (SATA0)-[PIO4]', leds: ['BSY', 'DRD', 'DWF', 'DSC', 'DRQ', 'CRR', 'IDX', 'ERR'] },
  { name: '错 误 (SATA0)', leds: ['BBK', 'UNC', '', 'INF', '', 'ABR', 'TON', 'AMN'] },
  { name: 'DMA', leds: ['RQ'] },
  { name: 'SATA-2', leds: ['PHY'] },
  { name: '电源 5V', skip: true, leds: ['5V'] },
  { name: '电源 12V', leds: ['12V'] },
];

export default function App() {
  return (
    <Desktop>
      <Global />
      <Defs />
      <Window>
        <TitleBar>
          <Logo />
          <Title>PC-3000 UDMA-E - China - [Data Extractor : 任务 - "Z:\2020年5月数据恢复任务\20200502-WDC WD30EZRZ-00Z5HB0"]</Title>
          <WinButtons>
            <WinButton aria-label="Minimize"><Ico w={10} h={10}><path d="M0 5.500h10" /></Ico></WinButton>
            <WinButton aria-label="Maximize"><Ico w={10} h={10}><path d="M.5.5h9v9h-9z" /></Ico></WinButton>
            <WinButton aria-label="Close"><Ico w={10} h={10}><path d="M0 0l10 10M10 0L0 10" /></Ico></WinButton>
          </WinButtons>
        </TitleBar>
        <MenuBar>
          <DiskLogo />
          {['PC-3000', '选项', '服务', '窗口', '帮助(Z)'].map(m => <MenuItem key={m}>{m}</MenuItem>)}
          <Spacer />
          <ChildButton aria-label="Minimize child"><Ico w={8} h={8}><path d="M1 6.500h6" stroke="#6c7a8c" strokeWidth="2" /></Ico></ChildButton>
          <ChildButton aria-label="Restore child"><Ico w={8} h={8}><path d="M2.500 3V.5h5v4H6M.5 3.500h5v4h-5zM0 3.500h6M2 1h6" stroke="#6c7a8c" /></Ico></ChildButton>
          <ChildButton aria-label="Close child"><Ico w={8} h={8}><path d="M1 1l6 6M7 1L1 7" stroke="#6c7a8c" strokeWidth="2" /></Ico></ChildButton>
        </MenuBar>
        <Work>
          <Content>
            <Toolbar>
              <ToolGroup>
                <ToolButton aria-label="Tools"><Tools /></ToolButton>
                <ToolButton aria-label="Log"><Scroll /></ToolButton>
              </ToolGroup>
              <ToolGroup>
                <ToolButton aria-label="Find"><Binoculars /></ToolButton>
                <ToolButton>RAW</ToolButton>
              </ToolGroup>
              <ToolGroup>
                <ToolButton aria-label="Compress"><Press /></ToolButton>
                <ToolButton aria-label="Save disk"><CylinderDown /></ToolButton>
              </ToolGroup>
              <ToolGroup>
                <ToolButton disabled aria-label="Map tree"><TreeShape /></ToolButton>
                <ToolButton disabled aria-label="Map shape"><TreeShape b /></ToolButton>
              </ToolGroup>
              <ToolGroup $blank />
              <ToolGroup>
                <ToolButton aria-label="Edit task"><PagePen /></ToolButton>
              </ToolGroup>
              <ToolGroup>
                <ToolButton aria-label="Start"><svg width="7" height="12" viewBox="0 0 7 12"><path d="M0 0l6.500 6L0 12z" /></svg></ToolButton>
                <ToolButton aria-label="Flow"><Flow /></ToolButton>
              </ToolGroup>
              <ToolGroup>
                <ToolButton aria-label="Pause"><Pause /></ToolButton>
                <ToolButton aria-label="Stop"><svg width="9" height="9"><path d="M0 0h9v9H0z" /></svg></ToolButton>
              </ToolGroup>
              <ToolGroup>
                <ToolButton aria-label="Windows"><Cascade /></ToolButton>
              </ToolGroup>
              <ToolGroup>
                <ToolButton aria-label="Exit"><Exit /></ToolButton>
              </ToolGroup>
            </Toolbar>

            <Split>
              <FolderPanel>
                <PanelHead>Folders</PanelHead>
                <TreeArea>
                  <Tree>
                    {tree.map((n, i) => (
                      <TreeRow key={i} $selected={n.selected}>
                        <Indent $level={n.level ?? 3} $guide={n.guide} />
                        <Node $line={n.level === undefined}>
                          <Toggle $open={n.open} aria-label="Toggle" />
                        </Node>
                        <Check type="checkbox" aria-label={n.head || 'Folder'} />
                        <IconSlot>{n.icon ? treeIcon[n.icon] : <Folder />}</IconSlot>
                        <Pieces items={[[0, n.head], ...(n.rest || [])]} />
                      </TreeRow>
                    ))}
                  </Tree>
                  <Bar $v $pos={284} $len="367px"><Chevron dir="u" /><Chevron dir="d" /></Bar>
                  <Bar $pos={17} $len="158px"><Chevron dir="l" /><Chevron dir="r" /></Bar>
                </TreeArea>
                <Mosaic width="1" height="1">
                  <g transform="translate(1 1)">
                    <path d="M173 19q2-6 12-7q8-3 14 1q12-6 24 1q14-8 26 0q16-7 30 0q8 2 10 5z" fill="#dedede" />
                    {blocks(treeBlocks, 7, 102)}
                    <path d="M179 453h26q-2 7-10 9q-14 2-16-9z" fill="#d8d8d8" />
                    <path d="M218 453h31q-2 14-15 15t-16-15z" fill="#d0d0d0" />
                    <path d="M252 453h31q-4 7-15 7t-16-7z" fill="#d6d6d6" />
                    <path d="M210 693h30q-3 7-15 7t-15-7z" fill="#d4d4d4" />
                  </g>
                </Mosaic>
              </FolderPanel>

              <ListPanel>
                <ListInner>
                  <ListBody>
                    <Table>
                      <colgroup>
                        <col width="16" /><col width="250" /><col width="40" />
                        <col width="80" /><col width="80" /><col />
                      </colgroup>
                      <thead>
                        <tr>
                          <Th />
                          <Th>Name <SortMark /></Th>
                          <Th $align="center">Ext</Th>
                          <Th $align="right">Start</Th>
                          <Th $align="right">Offset</Th>
                          <Th $align="right">Size</Th>
                        </tr>
                      </thead>
                      <tbody>
                        {files.map(([name, ext, start, offset, size], i) => (
                          <FileRow key={i} $current={i === 0}>
                            <Td />
                            <Td $align="left">
                              <NameCell>
                                <Check type="checkbox" aria-label={name[0][1]} />
                                <IconSlot>{fileIcon(ext)}</IconSlot>
                                <Pieces items={name} />
                              </NameCell>
                            </Td>
                            <Td $align="center" $ui>{ext}</Td>
                            <Td>{start}</Td>
                            <Td>{offset}</Td>
                            <Td>{size}</Td>
                          </FileRow>
                        ))}
                      </tbody>
                    </Table>
                  </ListBody>
                  <Bar $pos={17} $len="375px"><Chevron dir="l" /><Chevron dir="r" /></Bar>
                </ListInner>
                <Mosaic width="1" height="1">
                  {blocks(listBlocks, 330, 101)}
                  <path d="M74 20q4-4 14-4t14 4z" fill="#b8b8b8" />
                  <path d="M110 19q6-5 16-4t18 4z" fill="#e0e0e0" />
                  <path d="M68 679h27q-5 5-14 5t-13-5zM142 679h32v9q-3 15-16 15t-16-15z" fill="#d0d0d0" />
                </Mosaic>
              </ListPanel>
            </Split>

            <StatusBar>
              <StatusCell>对象:38</StatusCell>
              <StatusCell $pad={5}>{'共:  2.58 Gb'}</StatusCell>
              <StatusCell />
              <StatusCell />
            </StatusBar>
            <Groove />

            <MapPanel>
              <MapArea>
                <Cells>{Array.from({ length: 763 }, (_, i) => <Cell key={i} $first={i === 0} />)}</Cells>
                <ClassicBar>
                  <ClassicButton aria-label="Scroll up"><Tri up /></ClassicButton>
                  <ClassicThumb />
                  <ClassicButton aria-label="Scroll down"><Tri /></ClassicButton>
                </ClassicBar>
              </MapArea>
              <Controls>
                <LbaLabel htmlFor="lba">LBA位图</LbaLabel>
                <LbaBox>
                  <LbaInput id="lba" defaultValue="0" />
                  <DButton aria-label="Decimal">
                    <svg width="12" height="9" viewBox="0 0 12 9">
                      <path d="M1 1.500h1.500q2 0 2 3t-2 3H1z" fill="none" stroke="#000" strokeWidth="1.500" />
                      <path d="M8 0h3v4h1L9.500 8 7 4h1z" fill="#f00" />
                    </svg>
                  </DButton>
                </LbaBox>
                <PushButton $w={69}>前往</PushButton>
                <PauseButton aria-label="Pause map"><Pause /></PauseButton>
                <Spacer />
                <PushButton $w={94}>图例</PushButton>
              </Controls>
              <Watermark>盘首数据恢复<Phone>18913587620</Phone></Watermark>
            </MapPanel>
            <Tabs>
              {['日志', '位图', 'HEX', '结构', '状态', '进程'].map(n => <Tab key={n} $active={n === '位图'}>{n}</Tab>)}
            </Tabs>
            <Strip />
          </Content>
          <Side>
            <SideButton aria-label="Copy disk"><Cylinders /></SideButton>
          </Side>
        </Work>
        <Groups>
          {groups.map(gr => (
            <Group key={gr.name} $skip={gr.skip}>
              <Legend>{gr.name}</Legend>
              <Leds>{gr.leds.map((l, i) => <Led key={i}>{l}</Led>)}</Leds>
            </Group>
          ))}
        </Groups>
        <Edge />
      </Window>
      <Behind />
      <Taskbar>
        <TaskItem $left={48} $w={343} $bg="#f0f0f0" />
        <TaskItem $left={197} $w={49} $bg="#505f68" />
      </Taskbar>
    </Desktop>
  );
}
